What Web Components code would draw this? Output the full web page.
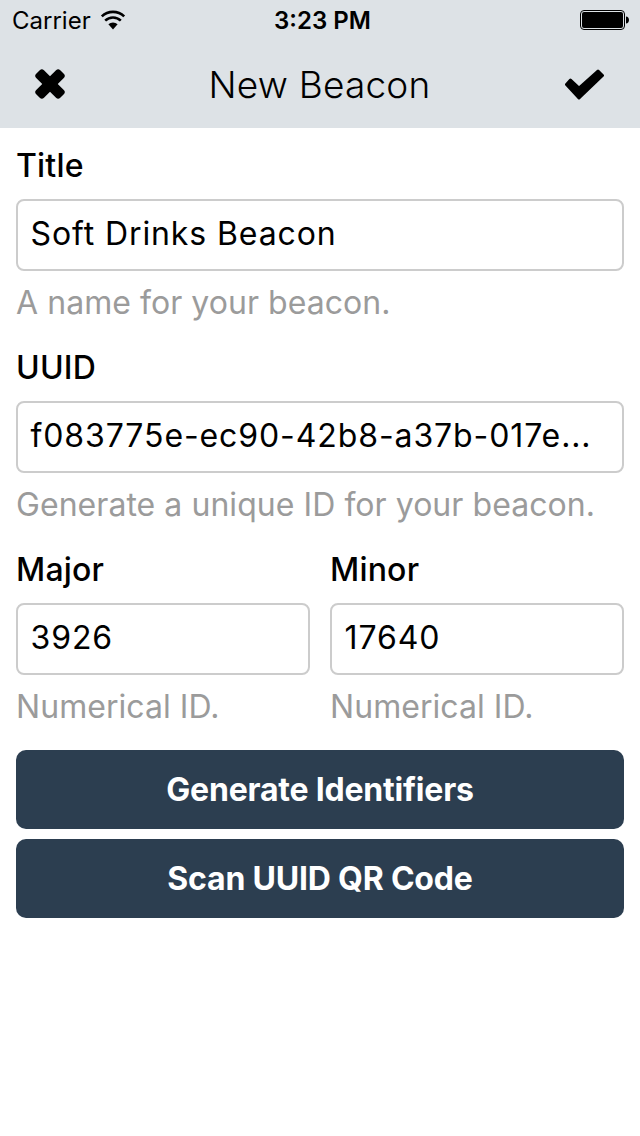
<!DOCTYPE html>
<html>
<head>
<meta charset="utf-8">
<title>New Beacon</title>
<style>
  html, body { margin: 0; padding: 0; background: #fff; }
  body { font-family: Inter, "Liberation Sans", sans-serif; width: 640px; height: 1136px; overflow: hidden; }
</style>
</head>
<body>
<beacon-header title="New Beacon"></beacon-header>
<beacon-form>
  <beacon-field label="Title" value="Soft Drinks Beacon" help="A name for your beacon."></beacon-field>
  <beacon-field label="UUID" value="f083775e-ec90-42b8-a37b-017e..." help="Generate a unique ID for your beacon."></beacon-field>
  <beacon-row>
    <beacon-field label="Major" value="3926" help="Numerical ID."></beacon-field>
    <beacon-field label="Minor" value="17640" help="Numerical ID."></beacon-field>
  </beacon-row>
  <beacon-button slot="actions">Generate Identifiers</beacon-button>
  <beacon-button slot="actions">Scan UUID QR Code</beacon-button>
</beacon-form>

<script>
class BeaconHeader extends HTMLElement {
  constructor() {
    super();
    this.attachShadow({ mode: 'open' });
  }

  connectedCallback() {
    const title = this.getAttribute('title') || '';
    this.shadowRoot.innerHTML = `
      <style>
        :host {
          display: block;
          height: 128px;
          background: #dde2e6;
          color: #000;
        }
        .status {
          height: 40px;
          display: grid;
          grid-template-columns: 1fr auto 1fr;
          align-items: center;
          padding: 0 10px 0 12px;
          font-size: 24px;
        }
        .carrier { display: flex; align-items: center; gap: 9px; }
        .time { font-weight: 600; margin-left: 3px; }
        .battery { justify-self: end; display: flex; }
        .nav {
          height: 88px;
          display: grid;
          grid-template-columns: 1fr auto 1fr;
          align-items: center;
          padding: 0 35px 0 34px;
        }
        .nav h1 {
          margin: 0;
          font-size: 37px;
          font-weight: 300;
          letter-spacing: 0.2px;
        }
        .done { justify-self: end; }
        svg { display: block; }
      </style>
      <div class="status">
        <div class="carrier">
          <span>Carrier</span>
          <svg width="26" height="20" viewBox="0 0 26 20">
            <path d="M13 19.500 8.400 14.200a6.800 6.800 0 0 1 9.200 0Z" fill="#000"/>
            <path d="M5.200 10.600a11.200 11.200 0 0 1 15.600 0" fill="none" stroke="#000" stroke-width="2.600"/>
            <path d="M1.800 6.400a16.200 16.200 0 0 1 22.400 0" fill="none" stroke="#000" stroke-width="2.600"/>
          </svg>
        </div>
        <div class="time">3:23 PM</div>
        <div class="battery">
          <svg width="50" height="20" viewBox="0 0 50 20">
            <rect x="0.500" y="0.500" width="44" height="19" rx="3.500" fill="none" stroke="#000" stroke-width="1"/>
            <rect x="2" y="2" width="41" height="16" rx="2" fill="#000"/>
            <path d="M46 6.500c1.800.2 3 1.600 3 3.500s-1.200 3.300-3 3.500Z" fill="#000"/>
          </svg>
        </div>
      </div>
      <div class="nav">
        <svg width="32" height="32" viewBox="0 0 32 32">
          <rect x="10.500" y="-1" width="11" height="34" rx="3" transform="rotate(45 16 16)" fill="#000"/>
          <rect x="10.500" y="-1" width="11" height="34" rx="3" transform="rotate(-45 16 16)" fill="#000"/>
        </svg>
        <h1>${title}</h1>
        <svg class="done" width="41" height="32" viewBox="0 0 41 32">
          <path d="M15 30 2.500 16.500 6.500 12 15 20 34 3 38.500 7.500Z" fill="#000" stroke="#000" stroke-width="3" stroke-linejoin="round"/>
        </svg>
      </div>
    `;
  }
}

class BeaconForm extends HTMLElement {
  constructor() {
    super();
    this.attachShadow({ mode: 'open' });
  }

  connectedCallback() {
    this.shadowRoot.innerHTML = `
      <style>
        :host {
          display: block;
          padding: 19px 16px 0;
        }
        .actions {
          display: flex;
          flex-direction: column;
          gap: 10px;
          margin-top: -3px;
        }
      </style>
      <slot></slot>
      <div class="actions"><slot name="actions"></slot></div>
    `;
  }
}

class BeaconRow extends HTMLElement {
  constructor() {
    super();
    this.attachShadow({ mode: 'open' });
  }

  connectedCallback() {
    this.shadowRoot.innerHTML = `
      <style>
        :host {
          display: grid;
          grid-template-columns: 294px 294px;
          gap: 20px;
        }
      </style>
      <slot></slot>
    `;
  }
}

class BeaconField extends HTMLElement {
  constructor() {
    super();
    this.attachShadow({ mode: 'open' });
  }

  connectedCallback() {
    const label = this.getAttribute('label') || '';
    const value = this.getAttribute('value') || '';
    const help = this.getAttribute('help') || '';
    this.shadowRoot.innerHTML = `
      <style>
        :host {
          display: block;
          margin-bottom: 26px;
        }
        .label {
          height: 36px;
          line-height: 38px;
          margin-bottom: 16px;
          font-size: 32px;
          font-weight: 500;
          color: #000;
          letter-spacing: 0.2px;
        }
        .input {
          box-sizing: border-box;
          height: 72px;
          line-height: 66px;
          padding: 0 12.500px;
          border: 2px solid #ccc;
          border-radius: 8px;
          font-size: 32px;
          color: #000;
          white-space: nowrap;
          overflow: hidden;
          letter-spacing: 0.9px;
        }
        .help {
          height: 40px;
          line-height: 40px;
          margin-top: 12px;
          font-size: 32px;
          color: #9b9b9b;
          white-space: nowrap;
          letter-spacing: 0.05px;
        }
      </style>
      <div class="label">${label}</div>
      <div class="input">${value}</div>
      <div class="help">${help}</div>
    `;
  }
}

class BeaconButton extends HTMLElement {
  constructor() {
    super();
    this.attachShadow({ mode: 'open' });
  }

  connectedCallback() {
    this.shadowRoot.innerHTML = `
      <style>
        :host {
          display: block;
          height: 79px;
          line-height: 80px;
          text-align: center;
          background: #2c3e50;
          border-radius: 10px;
          color: #fff;
          font-size: 32px;
          font-weight: 650;
          letter-spacing: -0.2px;
        }
      </style>
      <slot></slot>
    `;
  }
}

customElements.define('beacon-header', BeaconHeader);
customElements.define('beacon-form', BeaconForm);
customElements.define('beacon-row', BeaconRow);
customElements.define('beacon-field', BeaconField);
customElements.define('beacon-button', BeaconButton);
</script>
</body>
</html>
